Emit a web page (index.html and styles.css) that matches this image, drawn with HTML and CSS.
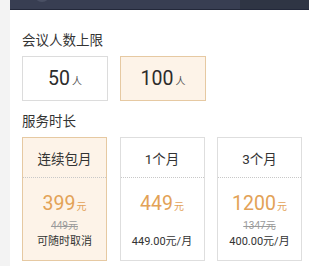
FILE: index.html
```html
<!DOCTYPE html>
<html>
<head>
<meta charset="utf-8">
<link rel="stylesheet" href="styles.css">
</head>
<body>
<div class="page">
  <div class="side"></div>
  <div class="main">
    <div class="topbar"><span class="avatar"></span><span class="dark"></span></div>
    <div class="content">
      <div class="label label-first">会议人数上限</div>
      <div class="opts">
        <div class="opt"><span class="num">50</span><span class="unit">人</span></div>
        <div class="opt sel"><span class="num">100</span><span class="unit">人</span></div>
      </div>
      <div class="label label-second">服务时长</div>
      <div class="cards">
        <div class="card sel">
          <div class="ctop">连续包月</div>
          <div class="cbot">
            <div class="price"><span class="pnum">399</span><span class="yuan">元</span></div>
            <div class="strike">449元</div>
            <div class="sub">可随时取消</div>
          </div>
        </div>
        <div class="card">
          <div class="ctop">1个月</div>
          <div class="cbot">
            <div class="price"><span class="pnum">449</span><span class="yuan">元</span></div>
            <div class="strike"></div>
            <div class="sub">449.00元/月</div>
          </div>
        </div>
        <div class="card">
          <div class="ctop">3个月</div>
          <div class="cbot">
            <div class="price"><span class="pnum">1200</span><span class="yuan">元</span></div>
            <div class="strike">1347元</div>
            <div class="sub">400.00元/月</div>
          </div>
        </div>
      </div>
    </div>
  </div>
</div>
</body>
</html>
```
FILE: styles.css
```css
html, body {
  margin: 0;
  padding: 0;
  background: #ffffff;
}
body {
  font-family: "Roboto", "Noto Sans CJK SC", sans-serif;
  color: #333333;
}
.page {
  display: flex;
  width: 309px;
  height: 266px;
  overflow: hidden;
}
.side {
  width: 10px;
  background: #f3f3f3;
  flex: none;
}
.main {
  flex: 1;
  display: flex;
  flex-direction: column;
}
.topbar {
  height: 10px;
  background: #383e52;
  position: relative;
  overflow: hidden;
  border-bottom: 1px solid #23283a;
  box-sizing: border-box;
}
.avatar {
  position: absolute;
  left: 24px;
  top: -14px;
  width: 16px;
  height: 16px;
  border-radius: 50%;
  background: #4a5064;
}
.dark {
  position: absolute;
  left: 230px;
  top: 0;
  right: 0;
  bottom: 0;
  background: #2f3544;
}
.content {
  padding-left: 12px;
}
.label {
  font-size: 13.5px;
  line-height: 18px;
  color: #333333;
  font-family: "Noto Sans CJK SC", sans-serif;
}
.label-first {
  margin-top: 20px;
}
.label-second {
  margin-top: 10px;
}
.opts {
  display: flex;
  gap: 12px;
  margin-top: 8px;
}
.opt {
  width: 86px;
  height: 45px;
  box-sizing: border-box;
  border: 1px solid #dcdcdc;
  background: #ffffff;
  display: flex;
  align-items: baseline;
  justify-content: center;
  padding-top: 11px;
}
.opt.sel {
  background: #fdf3e8;
  border-color: #e6c9a2;
}
.num {
  font-size: 19.5px;
  line-height: 22px;
  color: #2c2c2c;
}
.unit {
  font-size: 10px;
  color: #555555;
  margin-left: 2px;
  font-family: "Noto Sans CJK SC", sans-serif;
}
.cards {
  display: grid;
  grid-template-columns: 85px 85px 85px;
  column-gap: 12.5px;
  margin-top: 8px;
}
.card {
  height: 124px;
  box-sizing: border-box;
  border: 1px solid #dedede;
  background: #ffffff;
  display: flex;
  flex-direction: column;
}
.card.sel {
  background: #fdf3e8;
  border-color: #e6c9a2;
}
.ctop {
  height: 40px;
  box-sizing: border-box;
  border-bottom: 1px dotted #c8c8c8;
  display: flex;
  align-items: center;
  justify-content: center;
  font-size: 13.5px;
  color: #333333;
  font-family: "Roboto", "Noto Sans CJK SC", sans-serif;
}
.cbot {
  display: flex;
  flex-direction: column;
  align-items: center;
  padding-top: 15px;
}
.price {
  line-height: 22px;
  height: 22px;
  color: #e3a257;
  display: flex;
  align-items: baseline;
}
.pnum {
  font-size: 19.5px;
}
.yuan {
  font-size: 10px;
  margin-left: 1px;
  font-family: "Noto Sans CJK SC", sans-serif;
}
.strike {
  height: 14px;
  line-height: 14px;
  margin-top: 4px;
  font-size: 10px;
  color: #9a9a9a;
  text-decoration: line-through;
}
.sub {
  height: 14px;
  line-height: 14px;
  margin-top: 2px;
  font-size: 11px;
  color: #333333;
}
```
